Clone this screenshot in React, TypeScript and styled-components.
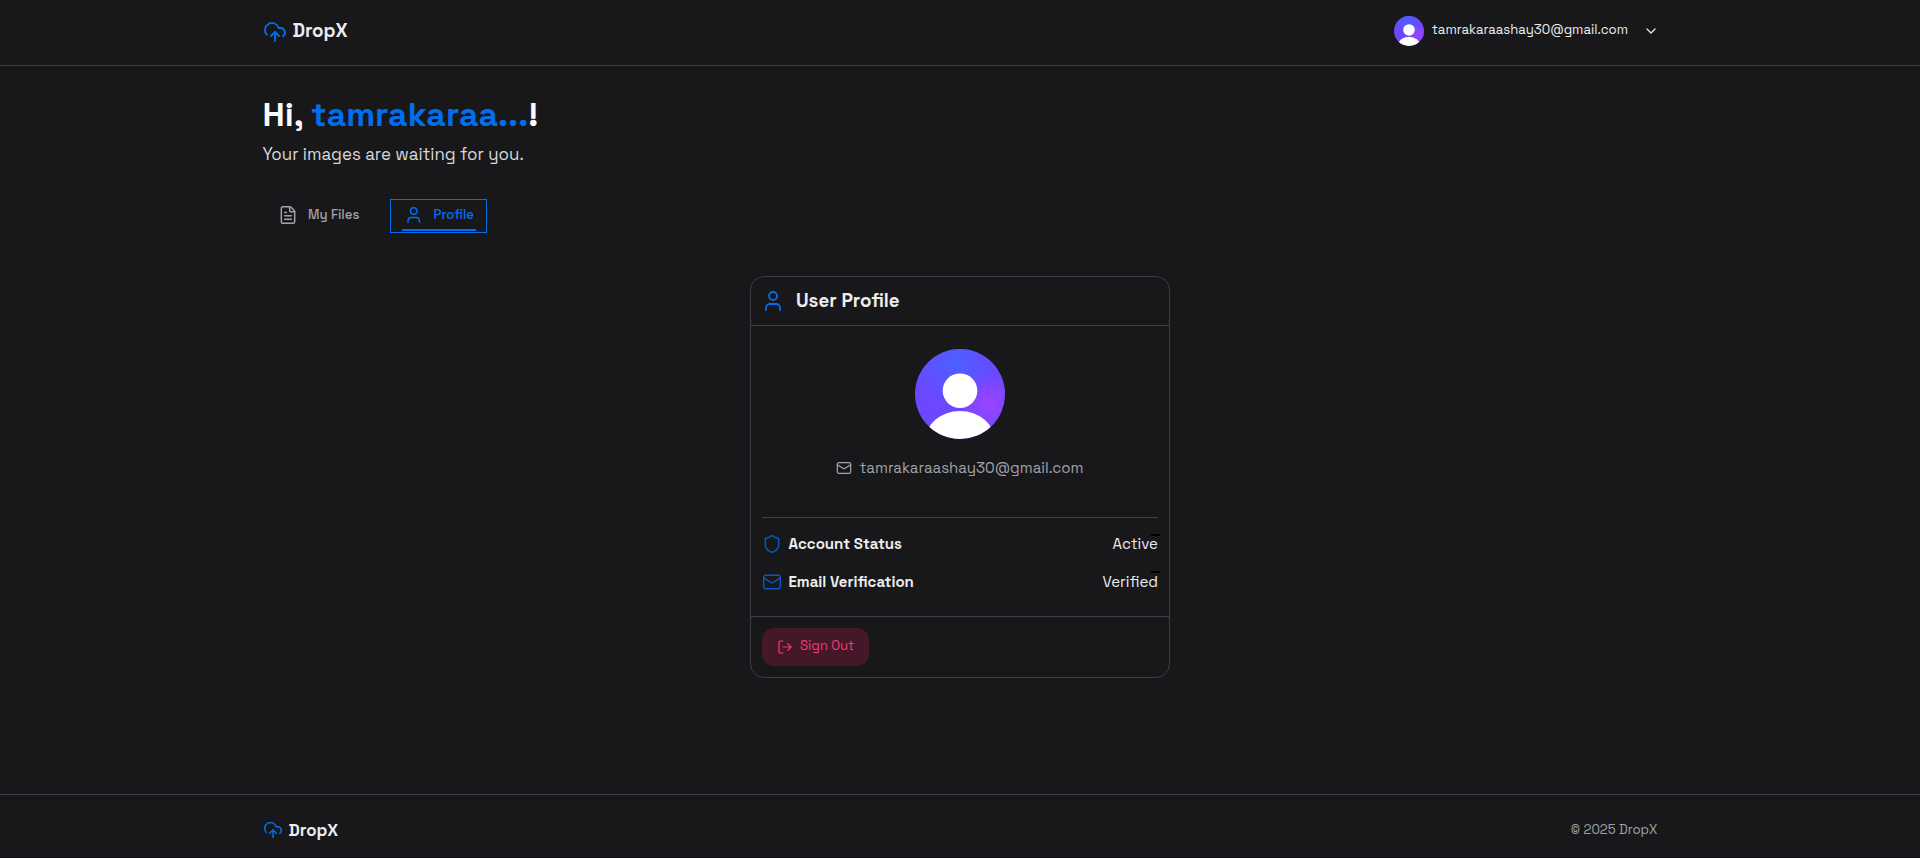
import React from 'react';
import styled, { createGlobalStyle } from 'styled-components';
import { ChevronDown, FileText, LogOut, Mail, Shield, User } from 'lucide-react';

const GlobalStyle = createGlobalStyle`
  *, *::before, *::after { box-sizing: border-box; }
  body {
    margin: 0;
    background: #18181b;
    color: #ecedee;
    font-family: 'Space Grotesk', Inter, sans-serif;
  }
`;

const blue = '#006fee';
const line = '#3f3f43';

const Page = styled.div`
  display: flex;
  flex-direction: column;
  height: 858px;
  overflow: hidden;
`;

const Header = styled.header`
  display: flex;
  justify-content: space-between;
  height: 66px;
  padding: 0 261px 0 262.5px;
  border-bottom: 1px solid ${line};
`;

const Brand = styled.div<{ $small?: boolean }>`
  display: flex;
  align-items: center;
  gap: 6px;
  height: ${p => (p.$small ? 70 : 63)}px;
  color: ${blue};
`;

const BrandName = styled.span<{ $small?: boolean }>`
  padding-bottom: ${p => (p.$small ? 1 : 3)}px;
  color: #ecedee;
  font-size: ${p => (p.$small ? 16.92 : 18.8)}px;
  font-weight: 700;
`;

const Account = styled.div`
  display: flex;
  align-items: center;
  height: 62px;
`;

const AccountEmail = styled.span`
  margin: 0 15px 3px 8px;
  font-size: 13.16px;
`;

const Main = styled.main`
  display: flex;
  flex-direction: column;
  flex: 1;
  padding: 27px 262px 0;
`;

const Greeting = styled.h1`
  margin: 0 0 0 0.5px;
  font-size: 33.84px;
  font-weight: 700;
  line-height: 44px;
  color: #fafafa;
`;

const GreetingName = styled.span`
  color: ${blue};
`;

const Subtitle = styled.p`
  margin: 3px 0 0 0.5px;
  font-size: 16.92px;
  line-height: 28px;
  color: #d9d9dc;
`;

const Tabs = styled.nav`
  display: flex;
  gap: 15px;
  margin-top: 31px;
`;

const Tab = styled.button<{ $active?: boolean }>`
  position: relative;
  display: flex;
  align-items: center;
  gap: 10.5px;
  height: 34px;
  padding: ${p => (p.$active ? '0 12px 2px 12.5px' : '0 14px 2px 14.5px')};
  width: ${p => (p.$active ? 97 : 113)}px;
  border: 1px solid ${p => (p.$active ? blue : 'transparent')};
  background: none;
  color: ${p => (p.$active ? blue : '#a1a1aa')};
  font: 500 13.16px 'Space Grotesk', Inter, sans-serif;
  white-space: nowrap;

  &::after {
    content: '';
    display: ${p => (p.$active ? 'block' : 'none')};
    position: absolute;
    left: 11px;
    right: 10px;
    bottom: 1px;
    height: 2px;
    background: ${blue};
  }
`;

const TabLabel = styled.span`
  padding-bottom: 2px;
`;

const Card = styled.section`
  display: flex;
  flex-direction: column;
  align-self: center;
  width: 420px;
  height: 402px;
  margin-top: 43px;
  border: 1px solid ${line};
  border-radius: 14px;
`;

const CardHeader = styled.div`
  display: flex;
  align-items: center;
  gap: 11px;
  height: 49px;
  padding-left: 10px;
  border-bottom: 1px solid ${line};
  color: ${blue};
`;

const CardTitle = styled.h2`
  margin: 0;
  padding-bottom: 2px;
  color: #ecedee;
  font-size: 18.8px;
  font-weight: 600;
`;

const CardBody = styled.div`
  display: flex;
  flex-direction: column;
  align-items: center;
  height: 291px;
  padding: 23px 11px 0;
  border-bottom: 1px solid ${line};
`;

const Contact = styled.div`
  display: flex;
  align-items: center;
  gap: 7px;
  height: 24px;
  margin-top: 17px;
  color: #a1a1aa;
  font-size: 15.04px;
`;

const ContactEmail = styled.span`
  padding-bottom: 2px;
`;

const Divider = styled.hr`
  width: 100%;
  height: 1px;
  margin: 37px 0 7px;
  border: 0;
  background: ${line};
`;

const Row = styled.div`
  display: flex;
  align-items: center;
  width: 100%;
  height: 38px;

  svg { color: ${blue}; opacity: 0.75; margin-left: -0.5px; }
`;

const RowLabel = styled.span`
  flex: 1;
  margin-left: 7px;
  padding-bottom: 2px;
  font-size: 15.04px;
  font-weight: 600;
`;

const RowValue = styled.span<{ $markTop: number }>`
  position: relative;
  padding-bottom: 2px;
  font-size: 15.04px;

  &::after {
    content: '';
    position: absolute;
    right: -2px;
    top: ${p => p.$markTop}px;
    width: 9px;
    height: 2px;
    background: #000;
  }
`;

const SignOut = styled.button`
  display: flex;
  align-items: center;
  gap: 7.5px;
  width: 107px;
  height: 38px;
  margin: 11px 0 0 11px;
  padding: 0 0 1px 14.5px;
  border: 0;
  border-radius: 12px;
  background: #441729;
  color: #fa3a76;
  font: 400 13.16px 'Space Grotesk', Inter, sans-serif;
`;

const SignOutLabel = styled.span`
  padding-bottom: 3px;
`;

const Footer = styled.footer`
  display: flex;
  justify-content: space-between;
  height: 64px;
  padding: 0 262.5px;
  border-top: 1px solid ${line};
  border-bottom: 1px solid #120d15;
`;

const Copyright = styled.span`
  height: 70px;
  line-height: 70px;
  font-size: 13.16px;
  color: #a1a1aa;
`;

function CloudMark({ size }: { size: number }) {
  return (
    <svg width={size} height={size} viewBox="0 0 24 24" fill="none" stroke="currentColor" strokeWidth="1.8" strokeLinecap="round" strokeLinejoin="round">
      <path d="M4 14.899A7 7 0 1 1 15.71 8h1.79a4.5 4.5 0 0 1 2.5 8.242" />
      <path d="M12 12v9" />
      <path d="m16 16-4-4-4 4" />
    </svg>
  );
}

function Avatar({ size, id }: { size: number; id: string }) {
  return (
    <svg width={size} height={size} viewBox="0 0 90 90">
      <defs>
        <radialGradient id={`${id}-top`} cx="0.45" cy="0.17" r="0.5">
          <stop offset="0" stopColor="#4c60ff" />
          <stop offset="1" stopColor="#4c60ff" stopOpacity="0" />
        </radialGradient>
        <radialGradient id={`${id}-side`} cx="0.82" cy="0.62" r="0.36">
          <stop offset="0" stopColor="#9b45ff" />
          <stop offset="1" stopColor="#9b45ff" stopOpacity="0" />
        </radialGradient>
        <clipPath id={`${id}-clip`}><circle cx="45" cy="45" r="45" /></clipPath>
      </defs>
      <g clipPath={`url(#${id}-clip)`}>
        <rect width="90" height="90" fill="#6c47ff" />
        <rect width="90" height="90" fill={`url(#${id}-top)`} />
        <rect width="90" height="90" fill={`url(#${id}-side)`} />
        <circle cx="45" cy="41.7" r="17.3" fill="#fff" />
        <ellipse cx="45" cy="91" rx="34.5" ry="29" fill="#fff" />
      </g>
    </svg>
  );
}

export default function App() {
  return (
    <Page>
      <GlobalStyle />
      <Header>
        <Brand><CloudMark size={24} /><BrandName>DropX</BrandName></Brand>
        <Account>
          <Avatar size={30} id="nav" />
          <AccountEmail>tamrakaraashay30@gmail.com</AccountEmail>
          <ChevronDown size={16} strokeWidth={1.8} />
        </Account>
      </Header>
      <Main>
        <Greeting>Hi, <GreetingName>tamrakaraa...</GreetingName>!</Greeting>
        <Subtitle>Your images are waiting for you.</Subtitle>
        <Tabs>
          <Tab><FileText size={20} strokeWidth={1.8} /><TabLabel>My Files</TabLabel></Tab>
          <Tab $active><User size={20} strokeWidth={1.8} /><TabLabel>Profile</TabLabel></Tab>
        </Tabs>
        <Card>
          <CardHeader>
            <User size={24} strokeWidth={1.8} />
            <CardTitle>User Profile</CardTitle>
          </CardHeader>
          <CardBody>
            <Avatar size={90} id="card" />
            <Contact>
              <Mail size={16} strokeWidth={1.8} />
              <ContactEmail>tamrakaraashay30@gmail.com</ContactEmail>
            </Contact>
            <Divider />
            <Row>
              <Shield size={20} strokeWidth={1.8} />
              <RowLabel>Account Status</RowLabel>
              <RowValue $markTop={0}>Active</RowValue>
            </Row>
            <Row>
              <Mail size={20} strokeWidth={1.8} />
              <RowLabel>Email Verification</RowLabel>
              <RowValue $markTop={-1}>Verified</RowValue>
            </Row>
          </CardBody>
          <SignOut><LogOut size={16} strokeWidth={1.8} /><SignOutLabel>Sign Out</SignOutLabel></SignOut>
        </Card>
      </Main>
      <Footer>
        <Brand $small><CloudMark size={20} /><BrandName $small>DropX</BrandName></Brand>
        <Copyright>© 2025 DropX</Copyright>
      </Footer>
    </Page>
  );
}
